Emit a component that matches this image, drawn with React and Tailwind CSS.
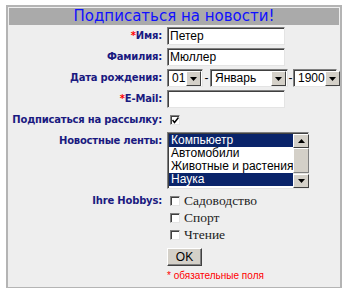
import React from 'react';

const label = "text-right font-bold text-[10px] tracking-[-0.2px] leading-[18px] text-[#1a1a80] whitespace-nowrap";
const sans = { fontFamily: '"Liberation Sans", Arial, sans-serif' };
const verd = { fontFamily: '"DejaVu Sans", Verdana, sans-serif' };

function Req() {
  return <span className="text-[#ff0000]">*</span>;
}

function TextBox({ value, w = 'w-[118px]' }) {
  return (
    <div className={`${w} h-[18px] bg-white border border-t-[#808080] border-l-[#808080] border-r-[#e4e4e4] border-b-[#e4e4e4] shadow-[inset_1px_1px_0_#404040] px-[2px] text-[12px] leading-[16px] text-black`} style={sans}>
      {value}
    </div>
  );
}

function Arrow({ up }) {
  return (
    <svg width="7" height="4" viewBox="0 0 7 4">
      <path d={up ? 'M0 4 L3.5 0 L7 4 Z' : 'M0 0 L7 0 L3.5 4 Z'} fill="#000" />
    </svg>
  );
}

function Btn({ up, className = 'w-[15px] h-[15px]' }) {
  return (
    <div className={`bg-[#d4d0c8] border border-t-[#ffffff] border-l-[#ffffff] border-r-[#404040] border-b-[#404040] flex items-center justify-center shrink-0 ${className}`}>
      <Arrow up={up} />
    </div>
  );
}

function Select({ value, w }) {
  return (
    <div className={`${w} h-[18px] bg-white border border-t-[#808080] border-l-[#808080] border-r-[#e4e4e4] border-b-[#e4e4e4] shadow-[inset_1px_1px_0_#404040] flex items-center pl-[4px] pr-px pt-px`} style={sans}>
      <span className="flex-1 text-[12px] leading-[15px] text-black">{value}</span>
      <Btn />
    </div>
  );
}

function Check({ checked }) {
  return (
    <span className="w-[10px] h-[10px] bg-white border border-t-[#808080] border-l-[#808080] border-r-[#e4e4e4] border-b-[#e4e4e4] shadow-[inset_1px_1px_0_#404040] flex items-center justify-center shrink-0">
      {checked && (
        <svg width="7" height="7" viewBox="0 0 7 7">
          <path d="M0.5 3 L2.5 5.5 L6.5 0.5" stroke="#000" strokeWidth="1.5" fill="none" />
        </svg>
      )}
    </span>
  );
}

export default function App() {
  const feeds = [
    { t: 'Компьюетр', sel: true },
    { t: 'Автомобили' },
    { t: 'Животные и растения' },
    { t: 'Наука', sel: true },
  ];
  const hobbies = ['Садоводство', 'Спорт', 'Чтение'];

  return (
    <div className="min-h-screen bg-white pt-[5px] pl-[6px]">
      <div className="w-[336px] border-2 border-[#b4b4b4] bg-[#eeeeee] p-px pb-[5px]">
        <div className="h-[17px] bg-[#aaaaaa] text-center text-[#1010ff] text-[15px] leading-[17px]" style={verd}>
          Подписаться на новости!
        </div>
        <div className="grid grid-cols-[153px_1fr] gap-x-[5px] gap-y-[3px] mt-[2px]" style={verd}>
          <div className={label}><Req />Имя:</div>
          <TextBox value="Петер" />

          <div className={label}>Фамилия:</div>
          <TextBox value="Мюллер" />

          <div className={label}>Дата рождения:</div>
          <div className="flex items-center text-[12px] text-black" style={sans}>
            <Select value="01" w="w-[36px]" />
            <span className="w-[7px] text-center">-</span>
            <Select value="Январь" w="w-[78px]" />
            <span className="w-[5px] text-center">-</span>
            <Select value="1900" w="w-[44px]" />
          </div>

          <div className={label}><Req />E-Mail:</div>
          <TextBox value="" />

          <div className={label}>Подписаться на рассылку:</div>
          <div className="h-[18px] flex items-center pl-[3px]">
            <Check checked />
          </div>

          <div className={label}>Новостные ленты:</div>
          <div className="w-[142px] h-[57px] bg-white border border-t-[#808080] border-l-[#808080] border-r-[#e4e4e4] border-b-[#e4e4e4] shadow-[inset_1px_1px_0_#404040] flex pl-px pt-px" style={sans}>
            <div className="flex-1 flex flex-col">
              {feeds.map(f => (
                <div key={f.t} className={`h-[13px] pl-[2px] text-[12px] leading-[13px] whitespace-nowrap ${f.sel ? 'bg-[#0a246a] text-white' : 'text-black'}`}>
                  {f.t}
                </div>
              ))}
            </div>
            <div className="w-[16px] flex flex-col bg-[#e6e4df]">
              <Btn up className="w-[16px] h-[14px]" />
              <div className="h-[25px] bg-[#d4d0c8] border border-t-[#ffffff] border-l-[#ffffff] border-r-[#808080] border-b-[#808080]"></div>
              <div className="flex-1"></div>
              <Btn className="w-[16px] h-[14px]" />
            </div>
          </div>

          <div className={label}>Ihre Hobbys:</div>
          <div className="flex flex-col">
            {hobbies.map(h => (
              <div key={h} className="h-[17px] flex items-center gap-[4px] pl-[3px]">
                <Check />
                <span className="text-[13.5px] leading-[17px] text-[#222]" style={{ fontFamily: '"Liberation Serif", "Times New Roman", serif' }}>{h}</span>
              </div>
            ))}
          </div>

          <div></div>
          <div className="pt-[2px]">
            <div className="w-[35px] h-[18px] bg-[#d4d0c8] border border-t-[#ffffff] border-l-[#ffffff] border-r-[#404040] border-b-[#404040] shadow-[inset_-1px_-1px_0_#808080] flex items-center justify-center text-[12px] text-black" style={sans}>
              OK
            </div>
          </div>

          <div></div>
          <div className="text-[10px] leading-[13px] text-[#ff0000]" style={sans}>* обязательные поля</div>
        </div>
      </div>
    </div>
  );
}
